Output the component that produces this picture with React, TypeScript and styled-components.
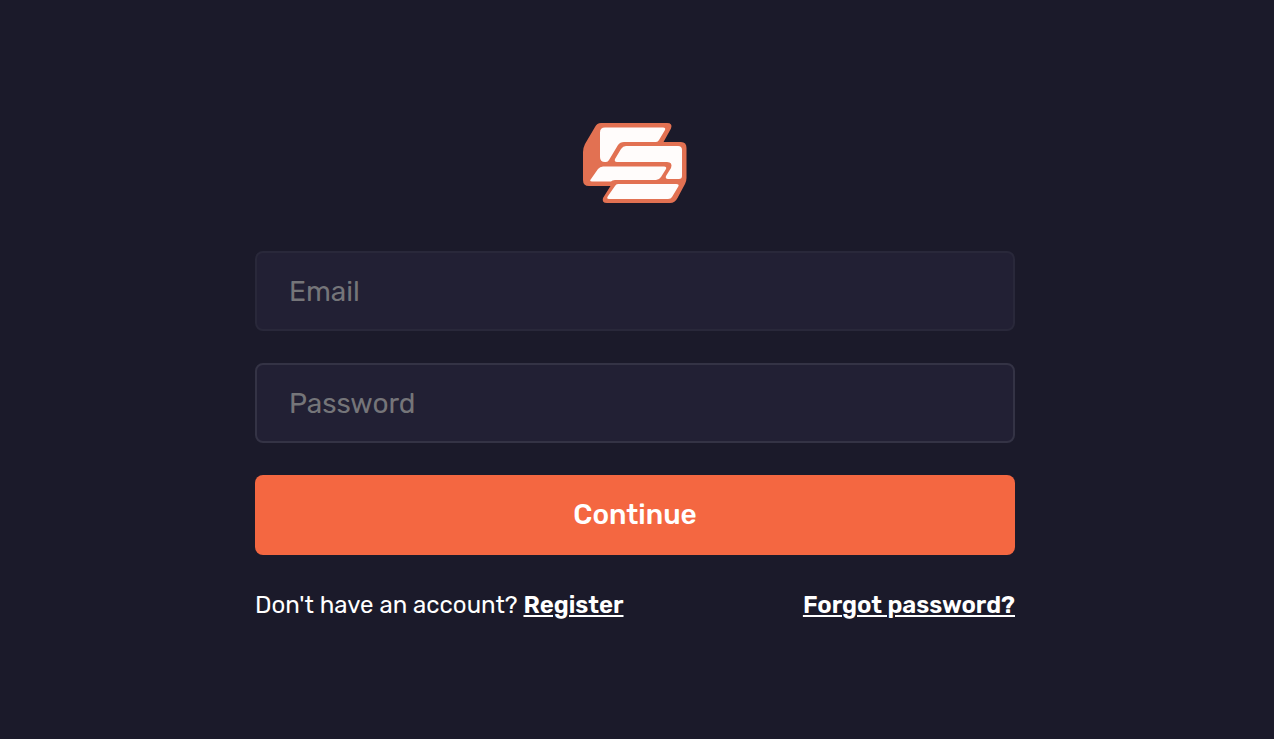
import React from "react";
import styled, { createGlobalStyle } from "styled-components";

const GlobalStyle = createGlobalStyle`
  * { box-sizing: border-box; }
  body {
    margin: 0;
    background: #1b1a2a;
    color: #fff;
    font-family: Rubik, Roboto, sans-serif;
  }
`;

const Page = styled.main`
  min-height: 100vh;
  display: flex;
  align-items: center;
  justify-content: center;
  padding: 7px 4px 0 0;
`;

const Form = styled.form`
  width: 100%;
  max-width: 760px;
  display: flex;
  flex-direction: column;
  gap: 32px;
`;

const Logo = styled.svg`
  display: block;
  width: 104px;
  height: 80px;
  margin: 0 auto 16px;
`;

const Field = styled.input<{ $border: string }>`
  width: 100%;
  height: 80px;
  padding: 0 32px;
  border: 2px solid ${(p) => p.$border};
  border-radius: 8px;
  background: #222034;
  color: #fff;
  font: 400 28px Rubik, Roboto, sans-serif;
  outline: none;

  &::placeholder {
    color: #757579;
    opacity: 1;
  }
`;

const Submit = styled.button`
  width: 100%;
  height: 80px;
  padding: 0 0 2px;
  border: 0;
  border-radius: 8px;
  background: #f46741;
  color: #fff;
  font: 500 28px Rubik, Roboto, sans-serif;
  cursor: pointer;
`;

const Footer = styled.div`
  display: flex;
  flex-wrap: wrap;
  justify-content: space-between;
  font-size: 24px;
  line-height: 36px;
`;

const TextLink = styled.a`
  color: #fff;
  font-weight: 600;
  text-decoration: underline;
  text-decoration-thickness: 2px;
  text-underline-offset: 2px;
`;

export default function App() {
  return (
    <>
      <GlobalStyle />
      <Page>
        <Form onSubmit={(e) => e.preventDefault()}>
          <Logo viewBox="583 123 104 80" role="img" aria-label="Logo">
            <path
              fill="#e27152"
              d="M601 123H667Q673 123 671 128.500L663.500 142H681Q686.500 142 686.500 148V178Q686.500 181 685 184L677.500 198Q675 203 670 203H607Q601.500 203 603 198L610.500 186H589Q583 186 583 180V152Q583 148 585 144L595 127Q597 123 601 123Z"
            />
            <g fill="#fffcfb">
              <path d="M605 127.500H663Q666 127.500 665 130L659 140Q658 142 656 142H624Q620 142 618 145L609 160Q608 162 606 162H605Q600 162 600 157V132.500Q600 127.500 605 127.500Z" />
              <path d="M626 146H678Q682 146 682 150V176Q682 179 679 179H668Q665 179 666 176L671 168Q673 162 667 162H617Q614 162 615 159L621 149Q623 146 626 146Z" />
              <path d="M603 166.500H664Q667 166.500 666 169L661 177Q659 180 656 180H615Q612 180 611 181.500H592Q589 181.500 591 179L598 169Q600 166.500 603 166.500Z" />
              <path d="M618 184H676Q680 184 678 187L672 197Q671 199 668 199H609Q606 199 608 196L615 186Q616 184 618 184Z" />
            </g>
          </Logo>
          <Field type="email" placeholder="Email" aria-label="Email" $border="#29283a" />
          <Field type="password" placeholder="Password" aria-label="Password" $border="#343345" />
          <Submit type="submit">Continue</Submit>
          <Footer>
            <span>
              Don't have an account? <TextLink href="#register">Register</TextLink>
            </span>
            <TextLink href="#forgot">Forgot password?</TextLink>
          </Footer>
        </Form>
      </Page>
    </>
  );
}
